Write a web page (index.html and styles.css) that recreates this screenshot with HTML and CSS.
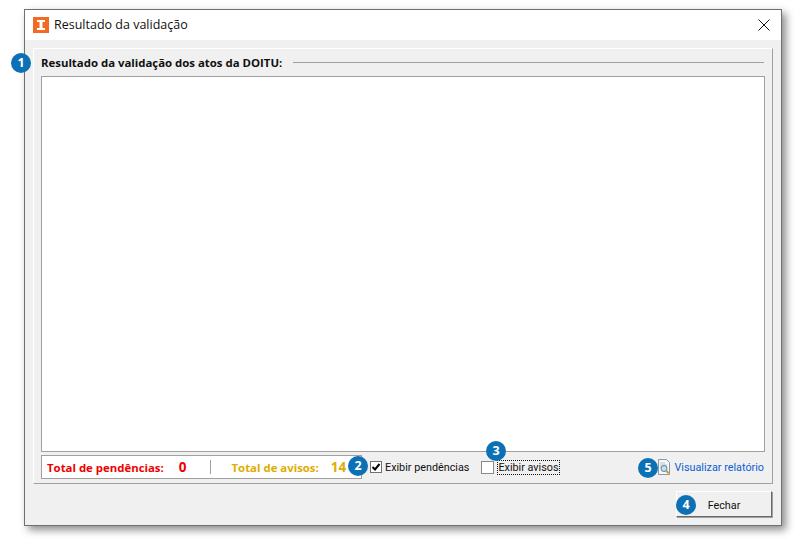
FILE: index.html
```html
<!DOCTYPE html>
<html lang="pt">
<head>
<meta charset="utf-8">
<title>Resultado da validação</title>
<link rel="stylesheet" href="styles.css">
</head>
<body>
<div class="window">
  <div class="titlebar">
    <svg class="app-icon" width="16" height="16" viewBox="0 0 16 16"><rect width="16" height="16" fill="#f26b25"/><path d="M4 3h8v2H9.500v6H12v2H4v-2h2.500V5H4z" fill="#fff"/></svg>
    <span class="title">Resultado da validação</span>
    <svg class="close" width="12" height="12" viewBox="0 0 12 12"><path d="M.5.5l11 11M11.500.5l-11 11" stroke="#111" stroke-width="1" fill="none"/></svg>
  </div>
  <div class="body">
    <div class="group">
      <div class="group-head">
        <span class="group-title">Resultado da validação dos atos da DOITU:</span>
        <span class="rule"></span>
      </div>
      <div class="list"></div>
      <div class="footer">
        <div class="totals">
          <span class="lbl red">Total de pendências:</span>
          <span class="num red">0</span>
          <span class="sep"></span>
          <span class="lbl amber">Total de avisos:</span>
          <span class="num amber">14</span>
        </div>
        <label class="check first"><span class="box"><svg width="10" height="10" viewBox="0 0 10 10"><path d="M1.500 5l2.500 2.500L8.500 2" stroke="#000" stroke-width="2" fill="none"/></svg></span><span>Exibir pendências</span></label>
        <label class="check second"><span class="box grey"></span><span class="focus">Exibir avisos</span></label>
        <a class="report">
          <svg width="14" height="16" viewBox="0 0 14 16"><path d="M1.500.5h8l3 3v12h-11z" fill="#f4f6f8" stroke="#8a97a5"/><path d="M3 4h5M3 6h7M3 8h2" stroke="#b9c3cc"/><circle cx="7" cy="9.500" r="3" fill="#bfe0f5" stroke="#5d7f9a"/><path d="M9.200 11.700l2.500 2.500" stroke="#e0913a" stroke-width="2"/></svg>
          <span>Visualizar relatório</span>
        </a>
      </div>
    </div>
    <div class="actions"><button class="btn">Fechar</button></div>
  </div>
  <span class="badge b1">1</span>
  <span class="badge b2">2</span>
  <span class="badge b3">3</span>
  <span class="badge b4">4</span>
  <span class="badge b5">5</span>
</div>
</body>
</html>
```

FILE: styles.css
```css
* { box-sizing: border-box; }
html, body { margin: 0; height: 100%; background: #fff; overflow: hidden; }
body { font-family: "Noto Sans", "Open Sans", sans-serif; font-size: 12px; color: #111; }
.window {
  position: absolute; left: 24px; top: 9px; width: 758px; height: 517px;
  border: 1px solid #6f6f6f; background: #f0f0f0;
  box-shadow: 4px 4px 8px rgba(0,0,0,.45);
  display: flex; flex-direction: column;
}
.titlebar { height: 30px; background: #fff; display: flex; align-items: center; padding: 0 11px 0 8px; flex: none; }
.app-icon { flex: none; }
.title { margin-left: 5px; padding-bottom: 2px; font-family: "Open Sans", sans-serif; font-size: 12.500px; flex: 1; }
.body { flex: 1; padding: 8px 8px 0 8px; display: flex; flex-direction: column; }
.group { height: 436px; border: 1px solid #a0a0a0; border-top-color: #fff; border-left-color: #fff; padding: 0 7px 0 7px; display: flex; flex-direction: column; }
.group-head { height: 27px; display: flex; align-items: center; flex: none; }
.group-title { font-family: "Open Sans", sans-serif; font-weight: 700; font-size: 11.400px; }
.rule { flex: 1; height: 1px; background: #a0a0a0; margin: 0 1px 0 11px; }
.list { height: 376px; border: 1px solid #a0a0a0; background: #fff; flex: none; }
.footer { display: flex; align-items: center; margin-top: 3px; height: 24px; flex: none; }
.totals { width: 321px; height: 24px; border: 1px solid #a0a0a0; background: #fff; display: flex; align-items: center; padding-left: 5px; font-family: "Open Sans", sans-serif; font-weight: 700; font-size: 11.400px; flex: none; }
.red { color: #f00000; }
.amber { color: #e0ac00; }
.num { font-size: 13.500px; }
.num.red { margin-left: 15px; }
.sep { width: 1px; height: 14px; background: #a0a0a0; margin-left: 23px; }
.lbl.amber { margin-left: 21px; }
.num.amber { margin-left: 12px; }
.check { display: flex; align-items: center; font-family: "Roboto", sans-serif; font-size: 10.800px; }
.first { margin-left: 8px; }
.second { margin-left: 12px; }
.box { width: 12px; height: 12px; border: 1px solid #707070; background: #fff; margin-right: 3px; display: flex; align-items: center; justify-content: center; }
.box.grey { border-color: #8a8a8a; width: 13px; height: 13px; margin-right: 4px; }
.focus { outline: 1px dotted #111; line-height: 13px; }
.report { margin-left: auto; margin-right: 1px; display: flex; align-items: center; gap: 3px; color: #0a5fd0; font-family: "Roboto", sans-serif; font-size: 10.800px; }
.actions { display: flex; justify-content: flex-end; padding: 7px 1px 0 0; }
.btn { width: 96px; height: 26px; border: 1px solid #fff; border-right-color: #696969; border-bottom-color: #696969; box-shadow: 1px 1px 0 #a0a0a0; background: #f0f0f0; font: 10.800px "Roboto", sans-serif; color: #111; padding: 3px 0 0; }
.badge { position: absolute; width: 20px; height: 20px; border-radius: 50%; background: #0b70b4; color: #fff; font: 700 12.500px/20px "Open Sans", sans-serif; text-align: center; }
.b1 { left: -14px; top: 43px; }
.b2 { left: 323px; top: 446px; }
.b3 { left: 461px; top: 431px; }
.b4 { left: 651px; top: 485px; }
.b5 { left: 613px; top: 448px; }
```
